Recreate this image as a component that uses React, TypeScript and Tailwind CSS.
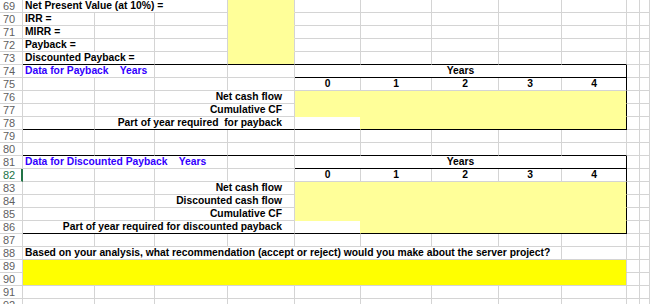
import type { ReactNode } from 'react';

const G = 'border-r-[#d4d4d4]';
const GB = 'border-b-[#d4d4d4]';
const LY = 'bg-[#ffff99]';
const BY = 'bg-[#ffff00]';

type CellProps = {
  w: string;
  fill?: string;
  r?: string;
  b?: string;
  className?: string;
  children?: ReactNode;
};

function Cell({ w, fill = 'bg-white', r = G, b = GB, className = '', children }: CellProps) {
  return (
    <div
      className={`${w} ${fill} ${r} ${b} h-[13px] shrink-0 border-r border-b flex items-center whitespace-pre leading-[12px] ${className}`}
    >
      {children}
    </div>
  );
}

function Hdr({ n, active = false }: { n: number; active?: boolean }) {
  return (
    <div
      className={`w-[23px] h-[13px] shrink-0 border-b border-r bg-white ${GB} flex items-center pl-[3px] font-['Liberation_Sans',Arial,sans-serif] font-normal text-[11px] leading-[12px] ${
        active ? 'border-r-2 border-r-[#217346] text-[#217346]' : `${G} text-[#5f5f5f]`
      }`}
    >
      {n}
    </div>
  );
}

// J and K columns, always empty
function Tail() {
  return (
    <>
      <Cell w="w-[13px]" />
      <Cell w="flex-1" />
    </>
  );
}

function Row({ children }: { children: ReactNode }) {
  return <div className="flex w-full">{children}</div>;
}

// E..I empty white cells
function EtoI({ b = GB }: { b?: string }) {
  return (
    <>
      <Cell w="w-[66px]" b={b} />
      <Cell w="w-[71px]" b={b} />
      <Cell w="w-[67px]" b={b} />
      <Cell w="w-[63px]" b={b} />
      <Cell w="w-[65px]" b={b} />
    </>
  );
}

function YearNums() {
  return (
    <>
      <Cell w="w-[66px]" className="justify-center">0</Cell>
      <Cell w="w-[71px]" className="justify-center">1</Cell>
      <Cell w="w-[67px]" className="justify-center">2</Cell>
      <Cell w="w-[63px]" className="justify-center">3</Cell>
      <Cell w="w-[65px]" r="border-r-black" className="justify-center">4</Cell>
    </>
  );
}

function Plain({ n }: { n: number }) {
  return (
    <Row>
      <Hdr n={n} />
      <Cell w="w-[72px]" />
      <Cell w="w-[60px]" />
      <Cell w="w-[73px]" />
      <Cell w="w-[67px]" />
      <EtoI />
      <Tail />
    </Row>
  );
}

function Label({ n, text, cols, fill }: { n: number; text: string; cols: 'AB' | 'BD' | 'AD'; fill: boolean }) {
  return (
    <Row>
      <Hdr n={n} />
      {cols === 'AB' ? (
        <>
          <Cell w="w-[72px]" />
          <Cell w="w-[60px]" />
          <Cell w="w-[140px]" className="justify-end pr-[12px]">{text}</Cell>
        </>
      ) : null}
      {cols === 'BD' ? (
        <>
          <Cell w="w-[72px]" b="border-b-black" />
          <Cell w="w-[200px]" b="border-b-black" className="justify-end pr-[12px]">{text}</Cell>
        </>
      ) : null}
      {cols === 'AD' ? (
        <Cell w="w-[272px]" b="border-b-black" className="justify-end pr-[12px]">{text}</Cell>
      ) : null}
      {fill ? (
        <Cell w="w-[332px]" fill={LY} r="border-r-black" b="border-b-[#ffff99]" />
      ) : (
        <>
          <Cell w="w-[66px]" r="border-r-[#ffff99]" b="border-b-black" />
          <Cell w="w-[266px]" fill={LY} r="border-r-black" b="border-b-black" />
        </>
      )}
      <Tail />
    </Row>
  );
}

function TopRow({ n, text, last = false }: { n: number; text: string; last?: boolean }) {
  const b = last ? 'border-b-black' : GB;
  return (
    <Row>
      <Hdr n={n} />
      <Cell w="w-[72px]" b={b} className="pl-[2px]">{text}</Cell>
      <Cell w="w-[60px]" b={b} />
      <Cell w="w-[73px]" b={b} />
      <Cell w="w-[67px]" fill={LY} b={last ? 'border-b-black' : 'border-b-[#ffff99]'} />
      <EtoI b={b} />
      <Tail />
    </Row>
  );
}

export default function App() {
  return (
    <div className="w-[650px] h-[304px] overflow-hidden bg-white font-['Liberation_Sans',Arial,sans-serif] font-bold text-[10.3px] text-black">
      {/* Summary */}
      <Row>
        <Hdr n={69} />
        <Cell w="w-[205px]" className="pl-[2px]">Net Present Value (at 10%) =</Cell>
        <Cell w="w-[67px]" fill={LY} b="border-b-[#ffff99]" />
        <EtoI />
        <Tail />
      </Row>
      <TopRow n={70} text="IRR =" />
      <TopRow n={71} text="MIRR =" />
      <TopRow n={72} text="Payback =" />
      <Row>
        <Hdr n={73} />
        <Cell w="w-[132px]" b="border-b-black" className="pl-[2px]">Discounted Payback =</Cell>
        <Cell w="w-[73px]" b="border-b-black" />
        <Cell w="w-[67px]" fill={LY} b="border-b-black" />
        <EtoI b="border-b-black" />
        <Tail />
      </Row>

      {/* Payback table */}
      <Row>
        <Hdr n={74} />
        <Cell w="w-[132px]" className="pl-[2px] text-[#3300ff]">Data for Payback    Years</Cell>
        <Cell w="w-[73px]" />
        <Cell w="w-[67px]" />
        <Cell w="w-[332px]" r="border-r-black" b="border-b-black" className="justify-center">Years</Cell>
        <Tail />
      </Row>
      <Row>
        <Hdr n={75} />
        <Cell w="w-[72px]" />
        <Cell w="w-[60px]" />
        <Cell w="w-[73px]" />
        <Cell w="w-[67px]" />
        <YearNums />
        <Tail />
      </Row>
      <Label n={76} text="Net cash flow" cols="AB" fill />
      <Label n={77} text="Cumulative CF" cols="AB" fill />
      <Label n={78} text="Part of year required  for payback" cols="BD" fill={false} />
      <Plain n={79} />
      <Row>
        <Hdr n={80} />
        <Cell w="w-[72px]" b="border-b-black" />
        <Cell w="w-[60px]" b="border-b-black" />
        <Cell w="w-[73px]" b="border-b-black" />
        <Cell w="w-[67px]" b="border-b-black" />
        <EtoI b="border-b-black" />
        <Tail />
      </Row>

      {/* Discounted payback table */}
      <Row>
        <Hdr n={81} />
        <Cell w="w-[205px]" className="pl-[2px] text-[#3300ff]">Data for Discounted Payback    Years</Cell>
        <Cell w="w-[67px]" />
        <Cell w="w-[332px]" r="border-r-black" b="border-b-black" className="justify-center">Years</Cell>
        <Tail />
      </Row>
      <Row>
        <Hdr n={82} active />
        <Cell w="w-[72px]" />
        <Cell w="w-[60px]" />
        <Cell w="w-[73px]" />
        <Cell w="w-[67px]" />
        <YearNums />
        <Tail />
      </Row>
      <Label n={83} text="Net cash flow" cols="AB" fill />
      <Label n={84} text="Discounted cash flow" cols="AB" fill />
      <Label n={85} text="Cumulative CF" cols="AB" fill />
      <Label n={86} text="Part of year required for discounted payback" cols="AD" fill={false} />
      <Plain n={87} />

      {/* Recommendation */}
      <Row>
        <Hdr n={88} />
        <Cell w="w-[539px]" className="pl-[2px]">
          Based on your analysis, what recommendation (accept or reject) would you make about the server project?
        </Cell>
        <Cell w="w-[65px]" />
        <Tail />
      </Row>
      <Row>
        <Hdr n={89} />
        <Cell w="w-[604px]" fill={BY} b="border-b-[#ffff00]" />
        <Tail />
      </Row>
      <Row>
        <Hdr n={90} />
        <Cell w="w-[604px]" fill={BY} />
        <Tail />
      </Row>
      <Plain n={91} />
      <Plain n={92} />
    </div>
  );
}
